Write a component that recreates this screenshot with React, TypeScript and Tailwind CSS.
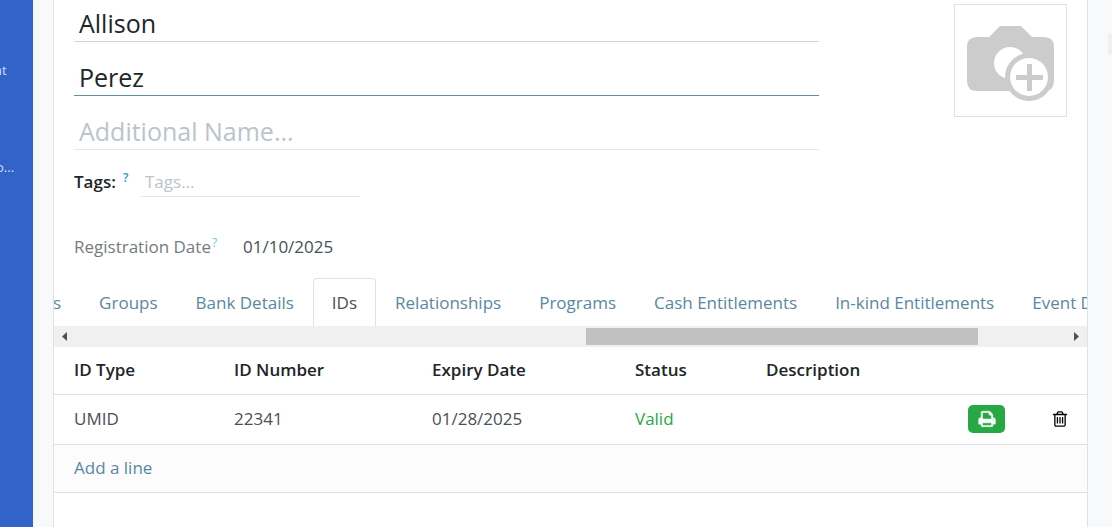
import { clsx } from "clsx"

const tabs = [
  "s",
  "Groups",
  "Bank Details",
  "IDs",
  "Relationships",
  "Programs",
  "Cash Entitlements",
  "In-kind Entitlements",
  "Event D",
]

const nameInput =
  "h-[38px] w-full border-b bg-transparent px-[5px] text-[25px] leading-8 text-[#212529] outline-none placeholder:text-[#bcc3ca]"

function PrintIcon() {
  return (
    <svg viewBox="0 0 1792 1792" className="size-[18px]" fill="currentColor" stroke="currentColor" strokeWidth="50" aria-hidden="true">
      <path d="M448 1536h896v-256h-896v256zm0-640h896v-384h-160q-40 0-68-28t-28-68v-160h-640v640zm1152 64q0-26-19-45t-45-19-45 19-19 45 19 45 45 19 45-19 19-45zm128 0v416q0 13-9.5 22.5t-22.5 9.5h-224v160q0 40-28 68t-68 28h-960q-40 0-68-28t-28-68v-160h-224q-13 0-22.5-9.5t-9.5-22.5v-416q0-79 56.5-135.5t135.5-56.5h64v-544q0-40 28-68t68-28h672q40 0 88 20t76 48l152 152q28 28 48 76t20 88v256h64q79 0 135.5 56.5t56.5 135.5z" />
    </svg>
  )
}

function TrashIcon() {
  return (
    <svg viewBox="0 0 1792 1792" className="size-[18px]" fill="currentColor" aria-hidden="true">
      <path d="M704 736v576q0 14-9 23t-23 9h-64q-14 0-23-9t-9-23v-576q0-14 9-23t23-9h64q14 0 23 9t9 23zm256 0v576q0 14-9 23t-23 9h-64q-14 0-23-9t-9-23v-576q0-14 9-23t23-9h64q14 0 23 9t9 23zm256 0v576q0 14-9 23t-23 9h-64q-14 0-23-9t-9-23v-576q0-14 9-23t23-9h64q14 0 23 9t9 23zm128 724v-948h-896v948q0 22 7 40.5t14.5 27 10.5 8.5h832q3 0 10.5-8.5t14.5-27 7-40.5zm-672-1076h448l-48-117q-7-9-17-11h-317q-10 2-17 11zm928 32v64q0 14-9 23t-23 9h-96v948q0 83-47 143.5t-113 60.5h-832q-66 0-113-58.5t-47-141.5v-952h-96q-14 0-23-9t-9-23v-64q0-14 9-23t23-9h309l70-167q15-37 54-63t79-26h320q40 0 79 26t54 63l70 167h309q14 0 23 9t9 23z" />
    </svg>
  )
}

function CameraIcon() {
  return (
    <svg viewBox="0 0 87 76" className="w-[87px]" aria-hidden="true">
      <path
        d="M10 11H22L32 1Q33 0 34 0H53Q54 0 55 1L65 11H77Q87 11 87 21V55Q87 65 77 65H10Q0 65 0 55V21Q0 11 10 11Z"
        fill="#ccc"
      />
      <circle cx="43" cy="37" r="16" fill="#fff" />
      <circle cx="62" cy="51" r="24" fill="#ccc" />
      <circle cx="62" cy="51" r="19" fill="#fff" />
      <path d="M60 38H65V49H76V54H65V65H60V54H49V49H60Z" fill="#ccc" />
    </svg>
  )
}

function Sidebar() {
  return (
    <nav className="flex w-[33px] shrink-0 flex-col items-start gap-[77px] overflow-hidden bg-[#3263c8] pt-[60px] text-[13px] leading-5 text-[#d3dff5]">
      <a href="#nt" className="-ml-1.5">nt</a>
      <a href="#more" className="-ml-1">o...</a>
    </nav>
  )
}

function TabBar() {
  return (
    <div>
      <div role="tablist" className="flex overflow-hidden">
        {tabs.map((tab, i) => (
          <button
            key={tab}
            role="tab"
            aria-selected={tab === "IDs"}
            className={clsx(
              "h-12 shrink-0 rounded-t border border-b-0 pr-[18px] whitespace-nowrap",
              i === 0 ? "-ml-0.5 pl-0" : "pl-[18px]",
              tab === "IDs" ? "border-[#dee2e6] text-[#495057]" : "border-transparent text-[#5a87a3]",
            )}
          >
            {tab}
          </button>
        ))}
      </div>
      <div className="flex h-[21px] items-center justify-between bg-[#f0f0f0] px-2 text-[#505050]">
        <svg viewBox="0 0 5 9" className="h-[9px] w-[5px]" fill="currentColor" aria-hidden="true">
          <path d="M5 0V9L0 4.5Z" />
        </svg>
        <div className="flex flex-1 justify-end pr-24">
          <div className="h-[17px] w-[43%] bg-[#c1c1c1]" />
        </div>
        <svg viewBox="0 0 5 9" className="h-[9px] w-[5px]" fill="currentColor" aria-hidden="true">
          <path d="M0 0V9L5 4.5Z" />
        </svg>
      </div>
    </div>
  )
}

function IdTable() {
  return (
    <table className="w-full table-fixed border-collapse text-left">
      <colgroup>
        <col className="w-[160px]" />
        <col className="w-[198px]" />
        <col className="w-[203px]" />
        <col className="w-[131px]" />
        <col />
        <col className="w-[77px]" />
        <col className="w-[62px]" />
      </colgroup>
      <thead>
        <tr className="h-[47px] border-b border-[#dee2e6] text-[#212529]">
          <th className="pl-5 font-semibold">ID Type</th>
          <th className="pl-5 font-semibold">ID Number</th>
          <th className="pl-5 font-semibold">Expiry Date</th>
          <th className="pl-5 font-semibold">Status</th>
          <th className="pl-5 font-semibold">Description</th>
          <th />
          <th />
        </tr>
      </thead>
      <tbody>
        <tr className="h-[50px] border-b border-[#dee2e6]">
          <td className="pl-5">UMID</td>
          <td className="pl-5">22341</td>
          <td className="pl-5">01/28/2025</td>
          <td className="pl-5 text-[#28a745]">Valid</td>
          <td />
          <td>
            <button
              aria-label="Print"
              className="ml-5 flex h-7 w-[37px] items-center justify-center rounded-[5px] bg-[#28a745] text-white"
            >
              <PrintIcon />
            </button>
          </td>
          <td>
            <button aria-label="Delete" className="ml-[26px] flex text-black">
              <TrashIcon />
            </button>
          </td>
        </tr>
        <tr className="h-12 border-b border-[#dee2e6] bg-[#fcfcfc]">
          <td colSpan={7} className="pl-5">
            <a href="#add" className="text-[#5a87a3]">
              Add a line
            </a>
          </td>
        </tr>
      </tbody>
    </table>
  )
}

export default function App() {
  return (
    <div className="flex h-screen overflow-hidden bg-[#f8f9fb] font-['Open_Sans',sans-serif] text-[17px] leading-6 text-[#495057]">
      <Sidebar />
      <main className="ml-5 min-w-0 flex-1 border-x border-[#dee2e6] bg-white">
        <div className="flex items-start justify-between px-5 pt-1">
          <div className="flex w-3/4 flex-col gap-4">
            <input aria-label="Family name" defaultValue="Allison" className={clsx(nameInput, "border-[#ced4da]")} />
            <input aria-label="Given name" defaultValue="Perez" className={clsx(nameInput, "border-[#5c8f9f]")} />
            <input aria-label="Additional name" placeholder="Additional Name..." className={clsx(nameInput, "border-[#e5e8eb]")} />
          </div>
          <button
            aria-label="Upload photo"
            className="flex size-[113px] items-center justify-center border border-[#dee2e6] pt-1.5"
          >
            <CameraIcon />
          </button>
        </div>
        <div className="flex items-center px-5 pt-4">
          <label htmlFor="tags" className="w-[49px] font-semibold whitespace-nowrap text-[#212529]">
            Tags:
          </label>
          <span className="w-[17px] pb-2 text-[12px] font-semibold text-[#2a9fc0]">?</span>
          <input
            id="tags"
            placeholder="Tags..."
            className="h-[30px] w-[220px] border-b border-[#e5e8eb] px-[5px] outline-none placeholder:text-[#bcc3ca]"
          />
        </div>
        <div className="flex items-center px-5 pt-[33px] pb-[15px]">
          <label htmlFor="registration" className="w-[138px] whitespace-nowrap text-[#767b80]">
            Registration Date
          </label>
          <span className="w-[31px] pb-2 text-[12px] text-[#6cc5d5]">?</span>
          <input id="registration" defaultValue="01/10/2025" className="h-6 w-40 outline-none" />
        </div>
        <TabBar />
        <IdTable />
      </main>
      <aside className="flex w-6 shrink-0 justify-end pt-[34px]">
        <div className="h-[21px] w-1 bg-[#f0f0f0]" />
      </aside>
    </div>
  )
}
